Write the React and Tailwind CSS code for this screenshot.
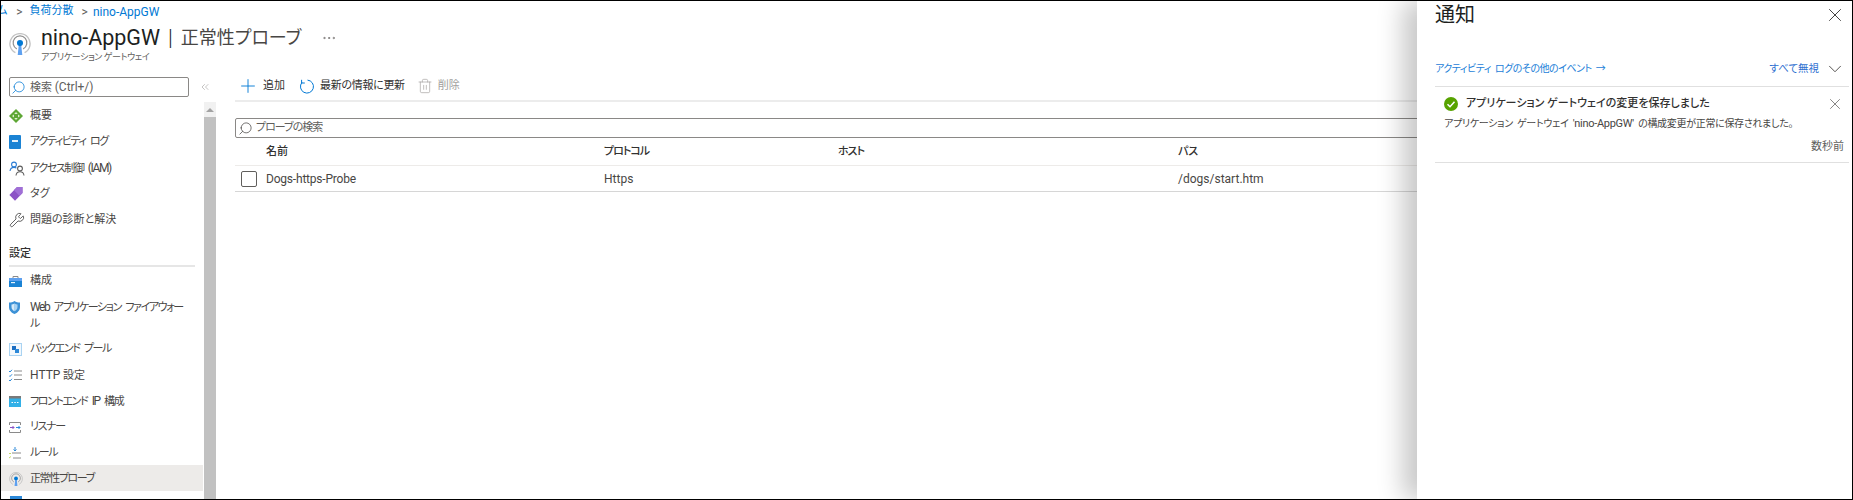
import React from 'react';
import { Plus, Trash2, Search, X, ChevronDown, ChevronsLeft, Ellipsis, Wrench } from 'lucide-react';

const L = ({ children }) => <span className="text-[12px]">{children}</span>;

const ProbeIcon = ({ size = 24 }) => (
  <svg width={size} height={size} viewBox="0 0 24 24" fill="none">
    <path d="M7 21.500a11 11 0 1 1 10 0" stroke="#c4c4c4" strokeWidth="1.500" />
    <path d="M8.500 17.300a7.500 7.500 0 1 1 7 0" stroke="#8f8f8f" strokeWidth="1.300" />
    <path d="M10.800 12h2.400l1.300 12h-5z" fill="#5ea0ef" />
    <circle cx="12" cy="11" r="3.300" fill="#0078d4" />
  </svg>
);

const OverviewIcon = () => (
  <svg width="14" height="14" viewBox="0 0 14 14">
    <path d="M7 0l7 7-7 7-7-7z" fill="#5ea735" />
    <path d="M7 3l1.800 2H5.200zM7 11L5.200 9h3.600z" fill="#dff0d0" />
    <path d="M3 7l2-1.600v3.200zM11 7L9 5.400v3.200z" fill="#dff0d0" />
  </svg>
);

const LogIcon = () => (
  <svg width="12" height="14" viewBox="0 0 12 14">
    <rect width="12" height="14" rx="1" fill="#1b83d4" />
    <rect x="3" y="5" width="6" height="2" fill="#e6f2fb" />
  </svg>
);

const IamIcon = () => (
  <svg width="16" height="15" viewBox="0 0 16 15" fill="none" stroke="#2b7cd3" strokeWidth="1.100">
    <circle cx="5" cy="3.500" r="2.400" />
    <path d="M1 10c.4-2.500 2-3.600 4-3.600 1 0 1.800.2 2.400.8" />
    <circle cx="11" cy="7.500" r="2.400" stroke="#5c5c5c" />
    <path d="M7 14.500c.3-2.600 2-3.800 4-3.800s3.700 1.200 4 3.800" stroke="#5c5c5c" />
  </svg>
);

const TagIcon = () => (
  <svg width="14" height="14" viewBox="0 0 14 14">
    <path d="M8 0h5.500v6L6 13.800.4 8z" fill="#8c53c6" />
    <path d="M5 3l3-3h5.500v6l-3 3z" fill="#a06fd6" />
  </svg>
);

const ConfigIcon = () => (
  <svg width="13" height="11" viewBox="0 0 13 11">
    <path d="M4 2V.5h5V2" fill="none" stroke="#8a8a8a" strokeWidth="1" />
    <rect y="2" width="13" height="9" fill="#1b83d4" />
    <rect y="2" width="13" height="3" fill="#5ea0ef" />
    <rect x="2" y="6" width="4" height="1.200" fill="#e6f2fb" />
  </svg>
);

const ShieldIcon = () => (
  <svg width="11" height="13" viewBox="0 0 11 13">
    <path d="M5.500 0c1.500 1 3.500 1.500 5.500 1.500V6c0 3.500-2.500 5.800-5.500 7C2.500 11.800 0 9.500 0 6V1.500C2 1.500 4 1 5.500 0z" fill="#3c91d6" />
    <path d="M5.500 2.500c1 .6 2 .9 3 1V6c0 2-1.300 3.500-3 4.300z" fill="#a9d3f2" />
    <path d="M5.500 2.500c-1 .6-2 .9-3 1V6c0 2 1.300 3.500 3 4.300z" fill="#d7ebf9" />
  </svg>
);

const BackendIcon = () => (
  <svg width="13" height="13" viewBox="0 0 13 13">
    <rect x=".5" y=".5" width="12" height="12" fill="#f2f8fd" stroke="#a9d3f2" />
    <rect x="3" y="3" width="4" height="4" fill="#1b6ec2" />
    <rect x="6" y="6" width="4" height="4" fill="#2b88d8" />
  </svg>
);

const HttpIcon = () => (
  <svg width="13" height="12" viewBox="0 0 13 12" fill="none" strokeWidth="1">
    <path d="M0 2l1 1 2-2.200M0 6.500l1 1 2-2.200M0 11l1 1 2-2.200" stroke="#2b88d8" />
    <path d="M5 2h8M5 6h8M5 10.500h8" stroke="#8a8a8a" />
  </svg>
);

const FrontendIcon = () => (
  <svg width="12" height="11" viewBox="0 0 12 11">
    <rect width="12" height="11" fill="#32b0e7" />
    <rect width="12" height="2.500" fill="#7a7a7a" />
    <path d="M2.500 6.500h1.500M5.300 6.500h1.500M8 6.500h1.500" stroke="#fff" />
  </svg>
);

const ListenerIcon = () => (
  <svg width="12" height="11" viewBox="0 0 12 11" fill="none" strokeWidth="1">
    <path d="M.5 3V.5h11V3M.5 8v2.500h11V8" stroke="#8a8a8a" />
    <path d="M1 5.500h4M3.500 4l1.500 1.500L3.500 7" stroke="#8c53c6" />
    <path d="M7 5.500h4M9.500 4l1.500 1.500L9.500 7" stroke="#2b88d8" />
  </svg>
);

const RuleIcon = () => (
  <svg width="12" height="12" viewBox="0 0 12 12" fill="none" strokeWidth="1">
    <path d="M6 0v3.500M4.500 2.500L6 4l1.500-1.500" stroke="#2b88d8" />
    <path d="M3 6h9M4 11h8" stroke="#8a8a8a" />
    <path d="M0 6.500h2M0 11l2-1.500" stroke="#c2d86a" />
  </svg>
);

const RefreshIcon = () => (
  <svg width="15" height="15" viewBox="0 0 15 15" fill="none" stroke="#0078d4" strokeWidth="1" className="ml-[14px] mt-[4px] shrink-0">
    <path d="M8.500 1.100A6.500 6.500 0 1 1 2.900 3.500" />
    <path d="M2.600.8v3.200h3.200" />
  </svg>
);

const topItems = [
  { key: 'overview', label: '概要', icon: <OverviewIcon /> },
  { key: 'log', label: 'アクティビティ ログ', icon: <LogIcon />, kana: true },
  { key: 'iam', label: <>アクセス制御 <L>(IAM)</L></>, icon: <IamIcon />, kana: true },
  { key: 'tag', label: 'タグ', icon: <TagIcon /> },
  { key: 'diag', label: '問題の診断と解決', icon: <Wrench size={16} strokeWidth={1.300} className="text-[#4a4a4a]" /> },
];

const settingItems = [
  { key: 'config', label: '構成', icon: <ConfigIcon /> },
  { key: 'waf', label: <><L>Web</L> アプリケーション ファイアウォー<br />ル</>, icon: <ShieldIcon />, tall: true, kana: true },
  { key: 'backend', label: 'バックエンド プール', icon: <BackendIcon />, kana: true },
  { key: 'http', label: <><L>HTTP</L> 設定</>, icon: <HttpIcon /> },
  { key: 'frontend', label: <>フロントエンド <L>IP</L> 構成</>, icon: <FrontendIcon />, kana: true },
  { key: 'listener', label: 'リスナー', icon: <ListenerIcon />, kana: true },
  { key: 'rule', label: 'ルール', icon: <RuleIcon />, kana: true },
  { key: 'probe', label: '正常性プローブ', icon: <ProbeIcon size={14} />, active: true, kana: true },
];

function NavItem({ item }) {
  return (
    <div className={`flex items-start pl-[8px] pt-[6px] text-[11px] leading-[16px] text-[#484644] ${item.tall ? 'h-[42px]' : 'h-[26px]'} ${item.active ? 'bg-[#edebe9]' : ''}`}>
      <span className="flex h-[16px] w-[21px] shrink-0 items-center">{item.icon}</span>
      <span className={`whitespace-nowrap ${item.kana ? 'tracking-[-1.4px] [word-spacing:3px]' : ''}`}>{item.label}</span>
    </div>
  );
}

function Sidebar() {
  return (
    <div className="flex w-[215px] shrink-0 flex-col">
      <div className="flex h-[27px] shrink-0 items-start pl-[8px] pt-[2px]">
        <div className="flex h-[20px] w-[180px] items-center gap-[4px] rounded-[2px] border border-[#8a8886] pl-[1px] text-[11px] text-[#605e5c]">
          <Search size={15} strokeWidth={1.200} className="-scale-x-100 text-[#0078d4]" />
          <span>検索 <L>(Ctrl+/)</L></span>
        </div>
        <ChevronsLeft size={12} strokeWidth={1} className="ml-[10px] mt-[4px] text-[#8a8886]" />
      </div>
      <div className="flex min-h-0 flex-1">
        <div className="w-[202px] shrink-0 overflow-hidden">
          {topItems.map(i => <NavItem key={i.key} item={i} />)}
          <div className="mx-[8px] mt-[13px] h-[22px] border-b-2 border-[#e6e6e6] pt-[1px] text-[11px] font-medium leading-[16px] text-[#323130]">設定</div>
          {settingItems.map(i => <NavItem key={i.key} item={i} />)}
          <div className="flex h-[26px] pl-[9px] pt-[5px]">
            <div className="h-[12px] w-[12px] bg-[#2b88d8]" />
          </div>
        </div>
        <div className="ml-[1px] flex w-[12px] flex-col bg-[#f1f1f1]">
          <div className="flex h-[15px] items-center justify-center">
            <div className="h-0 w-0 border-x-[4px] border-b-[4px] border-x-transparent border-b-[#a3a3a3]" />
          </div>
          <div className="flex-1 bg-[#c1c1c1]" />
        </div>
      </div>
    </div>
  );
}

function Main() {
  return (
    <div className="min-w-0 flex-1 pl-[19px]">
      <div className="flex h-[27px] items-start border-b-2 border-[#ececec] pl-[2px] text-[11px] leading-[22px] text-[#323130]">
        <Plus size={22} strokeWidth={1} className="text-[#0078d4]" />
        <span className="ml-[4px]">追加</span>
        <RefreshIcon />
        <span className="ml-[6px] tracking-[-0.3px]">最新の情報に更新</span>
        <Trash2 size={16} strokeWidth={1} className="ml-[12px] mt-[3px] text-[#a19f9d]" />
        <span className="ml-[5px] text-[#a19f9d]">削除</span>
      </div>
      <div className="mt-[16px] flex h-[20px] items-center gap-[3px] rounded-[2px] border border-[#8a8886] pl-[2px] text-[11px] text-[#605e5c]">
        <Search size={15} strokeWidth={1.200} className="-scale-x-100 text-[#484644]" />
        <span className="tracking-[-1px]">プローブの検索</span>
      </div>
      <div className="flex h-[28px] items-center border-b border-[#edebe9] pt-[1px] text-[11px] font-medium text-[#323130]">
        <span className="w-[369px] pl-[31px]">名前</span>
        <span className="w-[234px] tracking-[-1px]">プロトコル</span>
        <span className="w-[340px] tracking-[-1px]">ホスト</span>
        <span>パス</span>
      </div>
      <div className="flex h-[26px] items-center border-b border-[#d6d6d6] text-[12px] text-[#484644]">
        <span className="flex w-[369px] items-center">
          <span className="ml-[6px] mr-[9px] h-[16px] w-[16px] rounded-[2px] border border-[#605e5c]" />
          <span className="pt-[1px] tracking-[-0.2px]">Dogs-https-Probe</span>
        </span>
        <span className="w-[234px] pt-[1px]">Https</span>
        <span className="w-[340px]" />
        <span className="pt-[1px]">/dogs/start.htm</span>
      </div>
    </div>
  );
}

function NotificationPanel() {
  return (
    <div className="absolute inset-y-0 right-0 w-[435px] bg-white pl-[18px] pr-[3px] shadow-[-14px_0_24px_rgba(0,0,0,0.22)]">
      <div className="flex h-[31px] items-start justify-between">
        <span className="mt-[1px] text-[20px] leading-[26px] text-[#201f1e]">通知</span>
        <X size={22} strokeWidth={1} className="mr-[3px] mt-[3px] text-[#323130]" />
      </div>
      <div className="flex h-[55px] items-end justify-between border-b border-[#e0e0e0] pb-[8px] text-[10px] leading-[18px]">
        <span className="tracking-[-0.5px] text-[#1c80d8] [word-spacing:2px]">アクティビティ ログのその他のイベント →</span>
        <span className="flex items-center gap-[5px] text-[10.5px] text-[#2f6fd0]">
          すべて無視
          <ChevronDown size={22} strokeWidth={1} className="mr-[3px] -my-[2px] text-[#484644]" />
        </span>
      </div>
      <div className="h-[76px] border-b border-[#e0e0e0] pl-[9px] pr-[5px]">
        <div className="-mb-[5px] flex h-[34px] items-center text-[11px] font-medium text-[#323130]">
          <svg width="14" height="14" viewBox="0 0 14 14" className="mr-[8px] shrink-0">
            <circle cx="7" cy="7" r="7" fill="#57a300" />
            <path d="M3.500 7.200l2.500 2.500 4.500-5" fill="none" stroke="#fff" strokeWidth="1.500" />
          </svg>
          <span className="flex-1">アプリケーション ゲートウェイの変更を保存しました</span>
          <X size={18} strokeWidth={1} className="text-[#605e5c]" />
        </div>
        <div className="whitespace-nowrap text-[10px] leading-[16px] tracking-[-0.3px] text-[#484644] [word-spacing:2px]">アプリケーション ゲートウェイ <span className="text-[11px]">'nino-AppGW'</span> の構成変更が正常に保存されました。</div>
        <div className="mt-[7px] text-right text-[11px] leading-[16px] text-[#605e5c]">数秒前</div>
      </div>
    </div>
  );
}

export default function App() {
  return (
    <div className="relative flex h-[500px] w-[1853px] flex-col overflow-hidden border border-black bg-white font-['Roboto','Noto_Sans_CJK_JP',sans-serif] [font-feature-settings:'palt']">
      <div className="flex h-[19px] shrink-0 items-center pt-[2px] text-[11px] text-[#0078d4]">
        <span className="-ml-[4px]">ム</span>
        <span className="ml-[9px] text-[12px] text-[#605e5c]">&gt;</span>
        <span className="ml-[7px]">負荷分散</span>
        <span className="ml-[8px] text-[12px] text-[#605e5c]">&gt;</span>
        <span className="ml-[5px] text-[12px]">nino-AppGW</span>
      </div>
      <div className="flex h-[55px] shrink-0 items-start pl-[8px] pt-[13px]">
        <ProbeIcon size={22} />
        <div className="-mt-[8px] ml-[10px]">
          <div className="flex items-center text-[21.500px] leading-[26px] text-[#201f1e]">
            nino-AppGW
            <span className="mx-[8px] font-light">|</span>
            <span className="text-[18px] text-[#484644]">正常性プローブ</span>
            <Ellipsis size={16} strokeWidth={1} className="ml-[20px] text-[#605e5c]" />
          </div>
          <div className="text-[9px] leading-[13px] tracking-[-0.4px] text-[#605e5c]">アプリケーション ゲートウェイ</div>
        </div>
      </div>
      <div className="flex min-h-0 flex-1">
        <Sidebar />
        <Main />
      </div>
      <NotificationPanel />
    </div>
  );
}
